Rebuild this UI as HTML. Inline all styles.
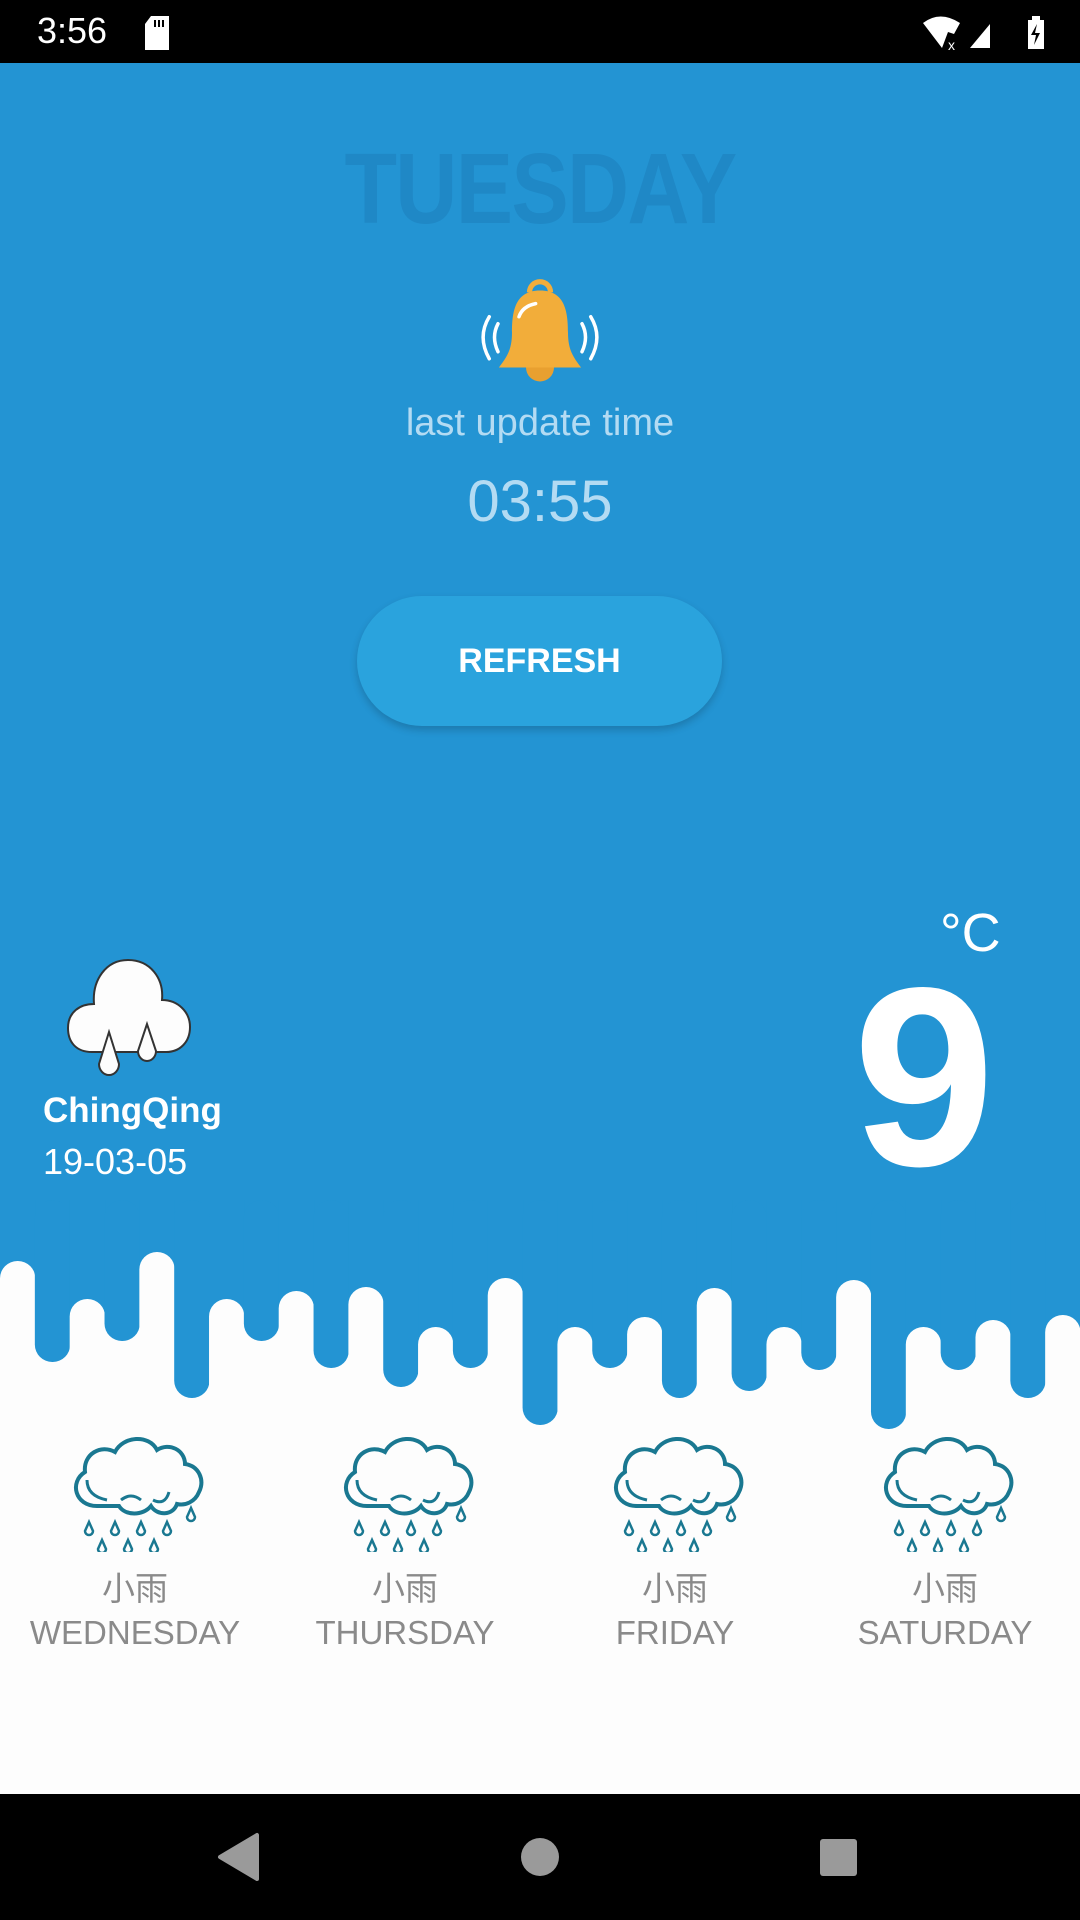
<!DOCTYPE html>
<html><head><meta charset="utf-8"><style>
*{margin:0;padding:0;box-sizing:border-box}
body{width:1080px;height:1920px;position:relative;overflow:hidden;background:#fdfdfd;font-family:"Liberation Sans","Noto Sans CJK SC",sans-serif}
.a{position:absolute}
.c{position:absolute;left:0;width:1080px;text-align:center}
</style></head><body>
<svg class="a" style="left:0;top:0" width="1080" height="1920">
<rect x="0" y="63" width="1080" height="1200" fill="#2394d3"/>
<g id="d"></g>
</svg>
<script>
(function(){
var v=[['w',1261],['b',1362],['w',1299],['b',1341],['w',1252],['b',1398],['w',1299],['b',1341],['w',1291],['b',1368],['w',1287],['b',1387],['w',1327],['b',1368],['w',1278],['b',1425],['w',1327],['b',1368],['w',1317],['b',1398],['w',1288],['b',1391],['w',1327],['b',1370],['w',1280],['b',1429],['w',1327],['b',1370],['w',1320],['b',1398],['w',1315]];
var w=1080/31,s='';
v.forEach(function(e,i){var x=(i*w).toFixed(2),ww=(w+0.5).toFixed(2);
if(e[0]=='b'){s+='<rect x="'+x+'" y="1200" width="'+ww+'" height="'+(e[1]-1200)+'" rx="17.4" fill="#2394d3"/>';}
else{s+='<rect x="'+x+'" y="1200" width="'+ww+'" height="'+(e[1]+20-1200)+'" fill="#2394d3"/><rect x="'+x+'" y="'+e[1]+'" width="'+ww+'" height="300" rx="17.4" fill="#fdfdfd"/>';}
});
document.getElementById('d').innerHTML=s;})();
</script>
<!-- status bar -->
<div class="a" style="left:0;top:0;width:1080px;height:63px;background:#000"></div>
<div class="a" style="left:37px;top:10px;color:#fff;font-size:36px">3:56</div>
<svg class="a" style="left:143px;top:16px" width="28" height="34"><path d="M8 0H26V34H2V8Z" fill="#fff"/><rect x="11" y="4" width="2" height="7" fill="#000"/><rect x="15" y="4" width="2" height="7" fill="#000"/><rect x="19" y="4" width="2" height="7" fill="#000"/></svg>
<svg class="a" style="left:920px;top:14px" width="130" height="36"><path d="M3 9Q20 -4 40 9L34 20L28 18L22 34Z" fill="#fff"/><text x="28" y="36" fill="#fff" font-size="14" font-family="Liberation Sans">x</text><path d="M50 34L70 10V34Z" fill="#fff"/><rect x="108" y="6" width="16" height="29" fill="#fff"/><rect x="112" y="2" width="8" height="5" fill="#fff"/><path d="M117 10L111 21H116L114 31L120 19H115Z" fill="#000"/></svg>
<!-- top section -->
<div class="c" style="top:132px;font-size:100px;font-weight:bold;color:#1f88c6;transform:scaleX(0.86);letter-spacing:-2px">TUESDAY</div>
<svg class="a" style="left:470px;top:275px" width="140" height="115" viewBox="0 0 160 120">
<path d="M68 14A12 12 0 0 1 92 14" fill="none" stroke="#f2ad3a" stroke-width="6"/>
<path d="M80 12C52 12 48 35 48 60C48 80 42 88 33 100H127C118 88 112 80 112 60C112 35 108 12 80 12Z" fill="#f2ad3a"/>
<path d="M64 100A16 16 0 0 0 96 100Z" fill="#e8a030"/>
<path d="M56 42Q60 30 75 27" fill="none" stroke="#fff" stroke-width="4" stroke-linecap="round"/>
<path d="M22 42Q8 65 22 90M32 50Q24 65 32 82M138 42Q152 65 138 90M128 50Q136 65 128 82" fill="none" stroke="#fff" stroke-width="4" stroke-linecap="round"/>
</svg>
<div class="c" style="top:402px;font-size:38px;color:#b3dbf3">last update time</div>
<div class="c" style="top:468px;font-size:58px;color:#b3dbf3">03:55</div>
<div class="a" style="left:357px;top:596px;width:365px;height:130px;border-radius:65px;background:#2aa3dd;box-shadow:0 4px 8px rgba(0,0,0,0.18);color:#fff;font-size:34px;font-weight:bold;text-align:center;line-height:130px">REFRESH</div>
<!-- current -->
<svg class="a" style="left:62px;top:952px" width="135" height="132" viewBox="0 0 135 132">
<path d="M30 100C14 100 6 90 6 76C6 60 18 52 32 52C30 28 44 8 66 8C88 8 102 26 100 48C116 48 128 60 128 75C128 90 118 100 104 100Z" fill="#fdfdfd" stroke="#333" stroke-width="2"/>
<path d="M47 80L37 112A10 11 0 1 0 57 112Z" fill="#fdfdfd" stroke="#333" stroke-width="2"/>
<path d="M85 72L76 99A9 10 0 1 0 94 99Z" fill="#fdfdfd" stroke="#333" stroke-width="2"/>
</svg>
<div class="a" style="left:43px;top:1091px;font-size:35px;font-weight:bold;color:#fff">ChingQing</div>
<div class="a" style="left:43px;top:1141px;font-size:36px;color:#fff">19-03-05</div>
<div class="a" style="left:940px;top:902px;font-size:54px;color:#fff">°C</div>
<div class="a" style="left:853px;top:950px;font-size:255px;font-weight:bold;color:#fff;line-height:1;height:240px">9</div>
<!-- forecast -->
<svg width="0" height="0" style="position:absolute"><defs><g id="ic">
<path d="M-38 70C-60 70 -66 46 -50 36C-52 18 -34 8 -20 16C-12 0 14 -2 22 14C34 6 50 14 50 28C64 30 70 44 64 56C60 66 50 70 42 68C38 80 22 80 16 70C8 80 -10 80 -16 70Z" fill="none" stroke="#1a7891" stroke-width="4"/>
<path d="M-48 44Q-48 60 -28 64M-14 64Q-4 56 6 64M18 64Q30 70 34 56" fill="none" stroke="#1a7891" stroke-width="3"/>
<g fill="none" stroke="#1a7891" stroke-width="2.5">
<path id="dr" d="M-46 86L-50 95A4 4 0 1 0 -42 95Z"/>
<use href="#dr" x="26"/><use href="#dr" x="52"/><use href="#dr" x="78"/><use href="#dr" x="102" y="-14"/>
<use href="#dr" x="13" y="18"/><use href="#dr" x="39" y="18"/><use href="#dr" x="65" y="18"/>
</g></g></defs></svg>
<svg class="a" style="left:0;top:1432px" width="1080" height="120">
<use href="#ic" x="135" y="4"/><use href="#ic" x="405" y="4"/><use href="#ic" x="675" y="4"/><use href="#ic" x="945" y="4"/>
</svg>
<div class="a" style="left:0;top:1562px;width:1080px;font-size:33px;color:#8a8a8a">
<span class="a" style="left:35px;width:200px;text-align:center">小雨</span>
<span class="a" style="left:305px;width:200px;text-align:center">小雨</span>
<span class="a" style="left:575px;width:200px;text-align:center">小雨</span>
<span class="a" style="left:845px;width:200px;text-align:center">小雨</span>
</div>
<div class="a" style="left:0;top:1614px;width:1080px;font-size:33px;color:#8a8a8a">
<span class="a" style="left:0;width:270px;text-align:center">WEDNESDAY</span>
<span class="a" style="left:270px;width:270px;text-align:center">THURSDAY</span>
<span class="a" style="left:540px;width:270px;text-align:center">FRIDAY</span>
<span class="a" style="left:810px;width:270px;text-align:center">SATURDAY</span>
</div>
<!-- nav -->
<div class="a" style="left:0;top:1794px;width:1080px;height:126px;background:#000"></div>
<svg class="a" style="left:0;top:1794px" width="1080" height="126">
<path d="M220 63L257 41V85Z" fill="#9a9a9a" stroke="#9a9a9a" stroke-width="4" stroke-linejoin="round"/>
<circle cx="540" cy="63" r="19" fill="#9a9a9a"/>
<rect x="820" y="45" width="37" height="37" rx="3" fill="#9a9a9a"/>
</svg>
</body></html>
